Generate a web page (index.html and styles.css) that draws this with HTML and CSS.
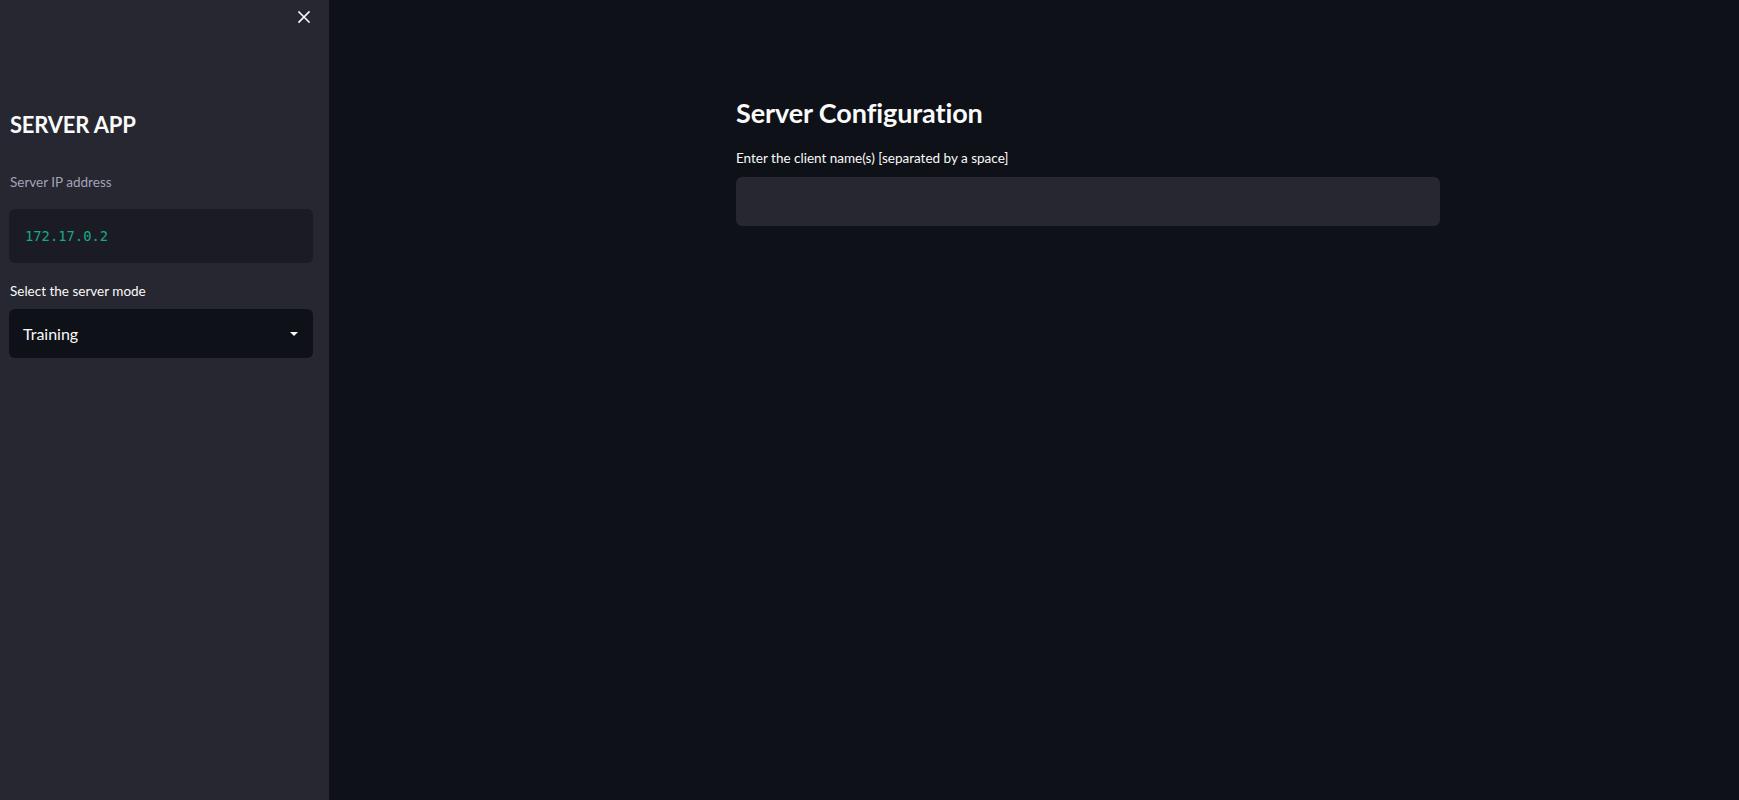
FILE: index.html
```html
<!DOCTYPE html>
<html>
<head>
<meta charset="utf-8">
<link rel="stylesheet" href="styles.css">
</head>
<body>
<div class="app">
  <aside class="sidebar">
    <div class="sidebar-top">
      <button class="close" aria-label="Close">
        <svg width="14" height="14" viewBox="0 0 14 14"><path d="M2 2 L12 12 M12 2 L2 12" stroke="#fafafa" stroke-width="1.6" stroke-linecap="square"/></svg>
      </button>
    </div>
    <h2 class="side-title">SERVER APP</h2>
    <label class="label disabled">Server IP address</label>
    <div class="code-box">172.17.0.2</div>
    <label class="label">Select the server mode</label>
    <div class="select">
      <span>Training</span>
      <svg width="10" height="6" viewBox="0 0 10 6"><path d="M1 1 L9 1 L5 5 Z" fill="#fafafa"/></svg>
    </div>
  </aside>
  <main class="main">
    <div class="block">
      <h1 class="title">Server Configuration</h1>
      <label class="label">Enter the client name(s) [separated by a space]</label>
      <div class="input"></div>
    </div>
  </main>
</div>
</body>
</html>
```

FILE: styles.css
```css
* { box-sizing: border-box; }
html, body {
  margin: 0;
  padding: 0;
  height: 100%;
  background: #0e1117;
  color: #fafafa;
  font-family: "Source Sans Pro", "Lato", "Noto Sans", sans-serif;
}
.app {
  display: flex;
  height: 800px;
  overflow: hidden;
}
.sidebar {
  width: 329px;
  flex: none;
  background: #262730;
  padding: 0 16px 0 9px;
  display: flex;
  flex-direction: column;
}
.sidebar-top {
  display: flex;
  justify-content: flex-end;
  height: 34px;
  padding-top: 10px;
  padding-right: 0;
}
.close {
  background: none;
  border: none;
  padding: 0;
  width: 14px;
  height: 14px;
  margin-right: 2px;
  cursor: pointer;
}
.side-title {
  margin: 73px 0 0 1px;
  font-size: 22px;
  font-weight: 700;
  line-height: 36px;
  letter-spacing: -0.2px;
}
.label {
  display: block;
  font-size: 13.5px;
  line-height: 20px;
  margin-left: 1px;
}
.label.disabled {
  color: #a3a3b8;
  margin-top: 29px;
}
.code-box {
  margin-top: 17px;
  height: 54px;
  background: #1b1b23;
  border-radius: 6px;
  padding-left: 16px;
  display: flex;
  align-items: center;
  font-family: "DejaVu Sans Mono", "Liberation Mono", monospace;
  font-size: 13.8px;
  color: #17a98a;
}
.code-box + .label {
  margin-top: 18px;
}
.select {
  margin-top: 8px;
  height: 49px;
  background: #0e1117;
  border-radius: 6px;
  display: flex;
  align-items: center;
  justify-content: space-between;
  padding: 0 14px 0 14px;
  font-size: 16px;
}
.main {
  flex: 1;
  padding-left: 407px;
}
.block {
  width: 704px;
  padding-top: 93px;
}
.title {
  margin: 0;
  font-size: 27px;
  font-weight: 700;
  line-height: 40px;
  letter-spacing: -0.1px;
}
.block .label {
  margin: 15px 0 0 0;
}
.input {
  margin-top: 9px;
  height: 49px;
  background: #262730;
  border-radius: 6px;
}
```
